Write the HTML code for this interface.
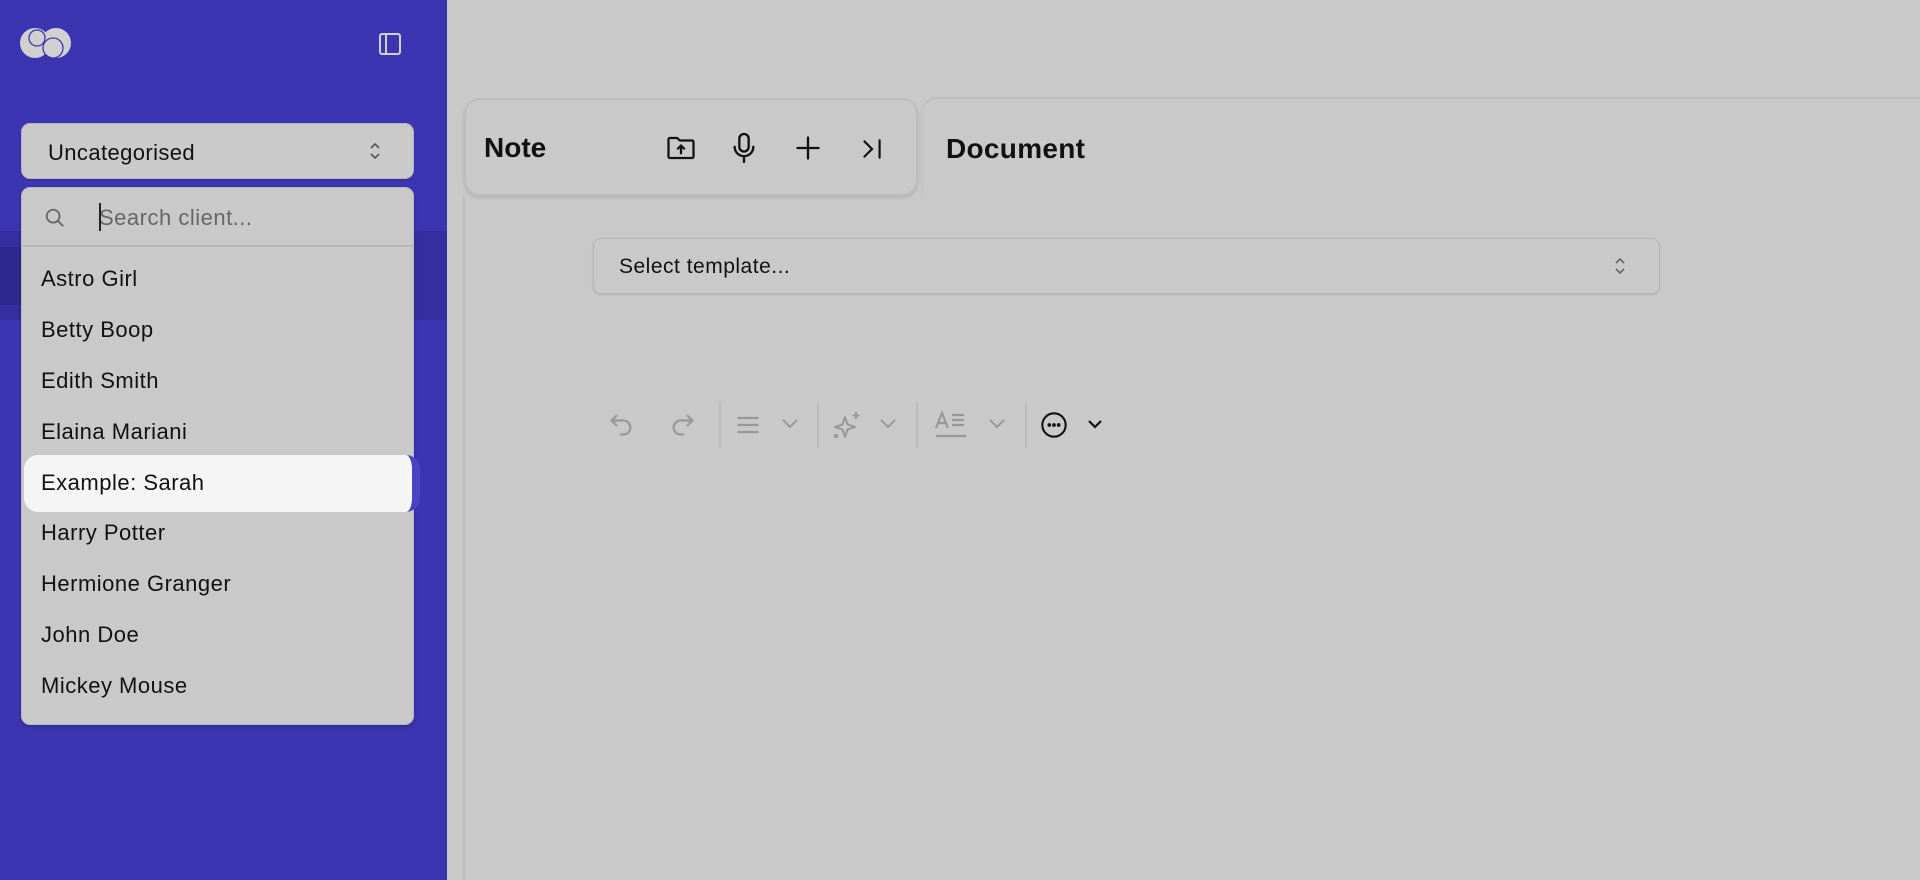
<!DOCTYPE html>
<html><head><meta charset="utf-8"><style>
*{box-sizing:border-box;margin:0;padding:0}
body{width:1920px;height:880px;overflow:hidden;background:#c9c9c9;font-family:"Liberation Sans",sans-serif;position:relative;color:#111}
.sb{position:absolute;left:0;top:0;width:447px;height:880px;background:#3c35b2}
.dark{position:absolute;left:0;top:231px;width:447px;height:89px;background:#352ea0}
.dark2{position:absolute;left:0;top:247px;width:40px;height:58px;background:#2d2790;border-radius:0 10px 10px 0}
.abs{position:absolute}
.btn{left:21px;top:123px;width:393px;height:56px;background:#cacaca;border:1px solid #b4b4c0;border-radius:9px;font-size:22px;letter-spacing:.4px;padding:16px 0 0 26px;box-shadow:0 1px 2px rgba(0,0,0,.15)}
.dd{left:21px;top:187px;width:393px;height:538px;background:#c9c9c9;border:1px solid #b8b8c0;border-radius:9px;box-shadow:0 2px 4px rgba(0,0,0,.2)}
.search{height:59px;border-bottom:2px solid #b7b7b7;position:relative}
.search span{position:absolute;left:77px;top:17px;font-size:22px;letter-spacing:.5px;color:#666}
.search .cur{position:absolute;left:77px;top:15px;width:2px;height:28px;background:#222}
.item{position:absolute;left:20px;font-size:22px;letter-spacing:.5px;color:#111}
.hl{left:24px;top:455px;width:396px;height:57px;background:#f5f5f5;border-radius:14px;border-right:8px solid #4a43c4}
.note{left:464px;top:98px;width:454px;height:98px;border:2px solid #bdbdbd;border-radius:16px;box-shadow:0 2px 3px rgba(0,0,0,.12)}
.doc{left:921px;top:97px;width:1010px;height:100px;border-top:2px solid #bdbdbd;border-left:2px solid #c3c3c3;border-radius:16px 0 0 0}
.vline{left:463px;top:196px;width:2px;height:684px;background:#bdbdbd}
h2{position:absolute;font-size:28px;font-weight:bold}
.sel{left:593px;top:238px;width:1067px;height:56px;border:1px solid #b5b5b5;border-radius:8px;font-size:21px;letter-spacing:.5px;padding:16px 0 0 25px;box-shadow:0 1px 2px rgba(0,0,0,.12)}
.sep{position:absolute;top:402px;width:2px;height:46px;background:#bdbdbd}
svg{position:absolute}
</style></head><body>
<div class="sb"></div>
<div class="dark"></div><div class="dark2"></div>
<svg style="left:20px;top:27px" width="52" height="32" viewBox="0 0 52 32"><circle cx="15" cy="16" r="15" fill="#d0d0d0"/><circle cx="36" cy="16" r="15" fill="#d0d0d0"/><circle cx="17" cy="11" r="8" fill="none" stroke="#3c35b2" stroke-width="1.3"/><circle cx="33" cy="21" r="10" fill="none" stroke="#3c35b2" stroke-width="1.3"/></svg>
<svg style="left:378px;top:32px" width="24" height="24" viewBox="0 0 24 24" fill="none" stroke="#d0d0d0" stroke-width="2"><rect x="2" y="2" width="20" height="20" rx="2"/><line x1="8" y1="2" x2="8" y2="22"/></svg>
<div class="abs btn">Uncategorised</div>
<svg style="left:368px;top:141px" width="14" height="20" viewBox="0 0 14 20" fill="none" stroke="#555" stroke-width="1.6"><path d="M3 7l4-4 4 4M3 13l4 4 4-4"/></svg>
<div class="abs dd">
<div class="search"><span>Search client...</span><div class="cur"></div>
<svg style="left:22px;top:19px" width="22" height="22" viewBox="0 0 24 24" fill="none" stroke="#666" stroke-width="2"><circle cx="10" cy="10" r="7"/><path d="M15 15l6 6"/></svg></div>
</div>
<div class="abs hl"></div>
<div class="item" style="left:41px;top:266px">Astro Girl</div>
<div class="item" style="left:41px;top:317px">Betty Boop</div>
<div class="item" style="left:41px;top:368px">Edith Smith</div>
<div class="item" style="left:41px;top:419px">Elaina Mariani</div>
<div class="item" style="left:41px;top:470px">Example: Sarah</div>
<div class="item" style="left:41px;top:520px">Harry Potter</div>
<div class="item" style="left:41px;top:571px">Hermione Granger</div>
<div class="item" style="left:41px;top:622px">John Doe</div>
<div class="item" style="left:41px;top:673px">Mickey Mouse</div>

<div class="abs note"></div>
<div class="abs doc"></div>
<div class="abs vline"></div>
<h2 style="left:484px;top:132px">Note</h2>
<h2 style="left:946px;top:133px;letter-spacing:.3px">Document</h2>
<svg style="left:665px;top:133px" width="32" height="30" viewBox="0 0 24 24" fill="none" stroke="#111" stroke-width="1.8" stroke-linejoin="round"><path d="M2 5a1 1 0 0 1 1-1h6l2 2h10a1 1 0 0 1 1 1v12a1 1 0 0 1-1 1H3a1 1 0 0 1-1-1z"/><path d="M12 17v-7M9 13l3-3 3 3"/></svg>
<svg style="left:730px;top:131px" width="28" height="34" viewBox="0 0 24 28" fill="none" stroke="#111" stroke-width="2" stroke-linecap="round"><rect x="8" y="2" width="8" height="15" rx="4"/><path d="M4 13a8 8 0 0 0 16 0M12 21v5"/></svg>
<svg style="left:794px;top:134px" width="28" height="28" viewBox="0 0 24 24" stroke="#111" stroke-width="2" stroke-linecap="round"><path d="M12 3v18M3 12h18"/></svg>
<svg style="left:859px;top:136px" width="26" height="26" viewBox="0 0 24 24" fill="none" stroke="#111" stroke-width="2" stroke-linecap="round"><path d="M5 5l7 7-7 7M19 4v16"/></svg>
<div class="abs sel">Select template...</div>
<svg style="left:1613px;top:256px" width="14" height="20" viewBox="0 0 14 20" fill="none" stroke="#666" stroke-width="1.6"><path d="M3 7l4-4 4 4M3 13l4 4 4-4"/></svg>

<svg style="left:607px;top:410px" width="28" height="28" viewBox="0 0 24 24" fill="none" stroke="#999" stroke-width="2" stroke-linecap="round"><path d="M4 9h10a6 6 0 0 1 0 12h-2M8 5L4 9l4 4"/></svg>
<svg style="left:669px;top:410px" width="28" height="28" viewBox="0 0 24 24" fill="none" stroke="#999" stroke-width="2" stroke-linecap="round"><path d="M20 9H10a6 6 0 0 0 0 12h2M16 5l4 4-4 4"/></svg>
<div class="sep" style="left:719px"></div>
<svg style="left:734px;top:411px" width="28" height="28" viewBox="0 0 24 24" stroke="#999" stroke-width="2"><path d="M3 6h18M3 12h18M3 18h18"/></svg>
<svg style="left:780px;top:416px" width="20" height="16" viewBox="0 0 20 16" fill="none" stroke="#999" stroke-width="2"><path d="M3 4l7 7 7-7"/></svg>
<div class="sep" style="left:817px"></div>
<svg style="left:832px;top:410px" width="30" height="30" viewBox="0 0 30 30" fill="none" stroke="#999" stroke-width="2" stroke-linejoin="round"><path d="M13 7l2.5 7.5L23 17l-7.5 2.5L13 27l-2.5-7.5L3 17l7.5-2.5z"/><path d="M24 2v7M20.5 5.5h7"/><circle cx="4" cy="26" r="1.2" fill="#999"/></svg>
<svg style="left:878px;top:416px" width="20" height="16" viewBox="0 0 20 16" fill="none" stroke="#999" stroke-width="2"><path d="M3 4l7 7 7-7"/></svg>
<div class="sep" style="left:916px"></div>
<svg style="left:934px;top:410px" width="34" height="30" viewBox="0 0 34 30" fill="none" stroke="#999" stroke-width="2.2"><path d="M2 18L8 3l6 15M4 13h8M18 5h12M18 10h12M18 15h12M2 26h30"/></svg>
<svg style="left:987px;top:416px" width="20" height="16" viewBox="0 0 20 16" fill="none" stroke="#999" stroke-width="2"><path d="M3 4l7 7 7-7"/></svg>
<div class="sep" style="left:1025px"></div>
<svg style="left:1040px;top:411px" width="28" height="28" viewBox="0 0 24 24" fill="none" stroke="#111" stroke-width="1.8"><circle cx="12" cy="12" r="10"/><circle cx="8" cy="12" r=".7" fill="#111"/><circle cx="12" cy="12" r=".7" fill="#111"/><circle cx="16" cy="12" r=".7" fill="#111"/></svg>
<svg style="left:1085px;top:416px" width="20" height="16" viewBox="0 0 20 16" fill="none" stroke="#111" stroke-width="2.2"><path d="M4 5l6 6 6-6"/></svg>
</body></html>
